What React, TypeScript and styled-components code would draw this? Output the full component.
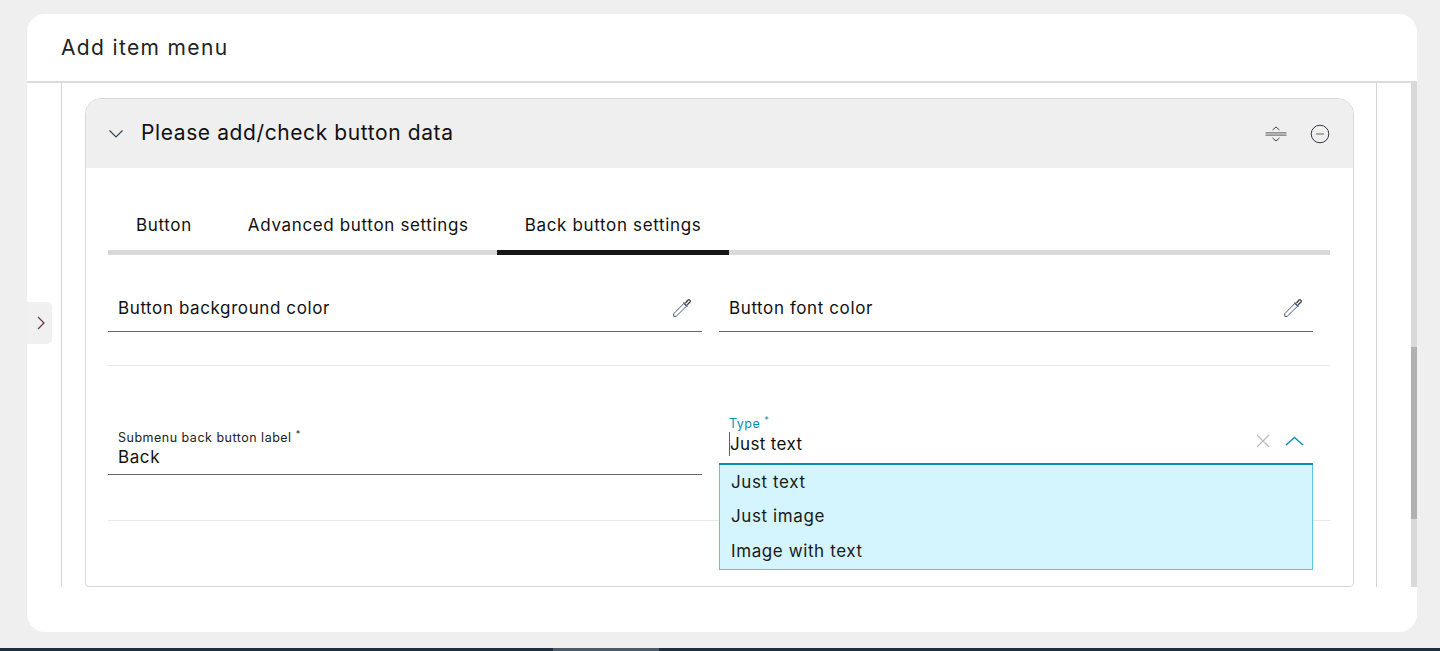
import React from 'react';
import styled, {createGlobalStyle} from 'styled-components';

const GlobalStyle = createGlobalStyle`
  html, body {
    margin: 0;
    padding: 0;
    height: 100%;
    background: #efefef;
    overflow: hidden;
  }
  body {
    font-family: Inter, "Liberation Sans", sans-serif;
    color: #1a1a1a;
  }
`;

const ChevronDown = () => (
    <svg width="16" height="10" viewBox="0 0 16 10" fill="none" stroke="#33475b" strokeWidth="1.2">
        <path d="M1.5 1.5 L8 8 L14.500 1.5"/>
    </svg>
);

const ExpandIcon = () => (
    <svg width="22" height="18" viewBox="0 0 22 18" fill="none">
        <path d="M7.500 5 L11 2 L14.500 5" stroke="#444" strokeWidth="1"/>
        <path d="M7.500 13 L11 16 L14.500 13" stroke="#444" strokeWidth="1"/>
        <path d="M0.500 7.800 H21.500 M0.500 10.200 H21.500" stroke="#777" strokeWidth="1.200"/>
    </svg>
);

const MinusCircleIcon = () => (
    <svg width="20" height="20" viewBox="0 0 20 20" fill="none">
        <circle cx="10" cy="10" r="8.800" stroke="#3a3a4a" strokeWidth="1"/>
        <path d="M6 10 H14" stroke="#a8a8a8" strokeWidth="2"/>
    </svg>
);

const PipetteIcon = () => (
    <svg width="20" height="20" viewBox="0 0 20 20" fill="none" stroke="#4a5a78" strokeWidth="1">
        <path d="M11.800 5.500 L14.500 8.200 L4.200 18.300 L1.800 18.500 L1.700 15.800 Z"/>
        <path d="M11.500 4.500 L15.500 8.500" strokeWidth="1.200"/>
        <path d="M13.500 5 L16 2 C17.200 1 19 2.600 18 4 L15.200 6.700" strokeWidth="1.300" stroke="#3a3a4a"/>
    </svg>
);

const CloseIcon = () => (
    <svg width="14" height="14" viewBox="0 0 14 14" fill="none" stroke="#bcbcbc" strokeWidth="1.200">
        <path d="M1 1 L13 13 M13 1 L1 13"/>
    </svg>
);

const ChevronUp = () => (
    <svg width="19" height="10" viewBox="0 0 19 10" fill="none" stroke="#1a8fb5" strokeWidth="1.600">
        <path d="M1 9 L9.500 1.500 L18 9"/>
    </svg>
);

const ChevronRight = () => (
    <svg width="8" height="14" viewBox="0 0 8 14" fill="none" stroke="#6b3a55" strokeWidth="1.300">
        <path d="M1 1 L7 7 L1 13"/>
    </svg>
);

const tabs = ['Button', 'Advanced button settings', 'Back button settings'];
const options = ['Just text', 'Just image', 'Image with text'];

const App = () => {
    return (
        <Page>
            <GlobalStyle/>
            <Main>
                <Modal>
                    <ModalHeader>Add item menu</ModalHeader>
                    <ModalBody>
                        <SideToggle><ChevronRight/></SideToggle>
                        <Scroller>
                            <Section>
                                <Card>
                                    <CardHeader>
                                        <CardTitleGroup>
                                            <ChevronDown/>
                                            <CardTitle>Please add/check button data</CardTitle>
                                        </CardTitleGroup>
                                        <CardActions>
                                            <ExpandIcon/>
                                            <MinusCircleIcon/>
                                        </CardActions>
                                    </CardHeader>
                                    <CardContent>
                                        <TabList>
                                            {tabs.map((tab, i) => (
                                                <Tab key={tab} $active={i === 2}>{tab}</Tab>
                                            ))}
                                        </TabList>
                                        <ColorRow>
                                            <ColorField>
                                                <FieldText>Button background color</FieldText>
                                                <PipetteIcon/>
                                            </ColorField>
                                            <ColorField>
                                                <FieldText>Button font color</FieldText>
                                                <PipetteIcon/>
                                            </ColorField>
                                        </ColorRow>
                                        <InputRow>
                                            <TextField>
                                                <FieldLabel>Submenu back button label <Star>*</Star></FieldLabel>
                                                <BackValue>Back</BackValue>
                                            </TextField>
                                            <SelectWrap>
                                                <FieldLabel $focused>Type <Star>*</Star></FieldLabel>
                                                <SelectValueRow>
                                                    <SelectValue>Just text</SelectValue>
                                                    <SelectIcons>
                                                        <CloseIcon/>
                                                        <ChevronUp/>
                                                    </SelectIcons>
                                                </SelectValueRow>
                                                <Dropdown>
                                                    {options.map(option => (
                                                        <DropdownItem key={option}>{option}</DropdownItem>
                                                    ))}
                                                </Dropdown>
                                            </SelectWrap>
                                        </InputRow>
                                    </CardContent>
                                </Card>
                            </Section>
                            <ScrollTrack>
                                <ScrollThumb/>
                            </ScrollTrack>
                        </Scroller>
                    </ModalBody>
                </Modal>
            </Main>
            <BottomBar>
                <BottomBarTab/>
            </BottomBar>
        </Page>
    );
};

export default App;

const Page = styled.div`
  height: 651px;
  display: flex;
  flex-direction: column;
  overflow: hidden;
`;

const Main = styled.div`
  flex: 1;
  min-height: 0;
  padding: 14px 23px 16px 27px;
  display: flex;
`;

const Modal = styled.div`
  flex: 1;
  min-width: 0;
  background: #fff;
  border-radius: 18px;
  padding-bottom: 45px;
  display: flex;
  flex-direction: column;
  overflow: hidden;
`;

const ModalHeader = styled.div`
  height: 67px;
  flex: none;
  padding-left: 34px;
  display: flex;
  align-items: center;
  font-size: 21px;
  letter-spacing: 1.35px;
  color: #222;
  border-bottom: 2px solid #dcdcdc;
`;

const ModalBody = styled.div`
  position: relative;
  flex: 1;
  min-height: 0;
`;

const SideToggle = styled.div`
  position: absolute;
  left: 0;
  top: 219px;
  width: 25px;
  height: 42px;
  background: #f0f0f0;
  border-radius: 0 5px 5px 0;
  display: flex;
  align-items: center;
  justify-content: flex-end;
  padding-right: 7px;
  box-sizing: border-box;
`;

const Scroller = styled.div`
  height: 100%;
  display: flex;
  padding-left: 34px;
  box-sizing: border-box;
`;

const Section = styled.div`
  flex: 1;
  min-width: 0;
  box-sizing: border-box;
  margin-right: 34px;
  padding: 15px 22px 0 23px;
  border-left: 1px solid #d4d4d4;
  border-right: 1px solid #d4d4d4;
`;

const Card = styled.div`
  height: 100%;
  box-sizing: border-box;
  border: 1px solid #d8d8d8;
  border-radius: 16px 16px 4px 4px;
  overflow: visible;
`;

const CardHeader = styled.div`
  height: 69px;
  background: #efefef;
  border-radius: 15px 15px 0 0;
  display: flex;
  align-items: center;
  justify-content: space-between;
  padding: 0 23px 0 22px;
`;

const CardTitleGroup = styled.div`
  display: flex;
  align-items: center;
  gap: 17px;
`;

const CardTitle = styled.div`
  font-size: 21px;
  letter-spacing: 0.6px;
  color: #111;
  margin-top: -2px;
`;

const CardActions = styled.div`
  display: flex;
  align-items: center;
  gap: 23px;
`;

const CardContent = styled.div`
  padding: 33px 23px 0 22px;
`;

const TabList = styled.div`
  display: flex;
  border-bottom: 5px solid #d9d9d9;
  height: 49px;
`;

const Tab = styled.div<{$active?: boolean}>`
  padding: 0 28px 2px;
  height: 54px;
  box-sizing: border-box;
  display: flex;
  align-items: center;
  font-size: 17px;
  letter-spacing: 0.65px;
  color: #111;
  border-bottom: 5px solid ${p => (p.$active ? '#161616' : 'transparent')};
`;

const ColorRow = styled.div`
  display: grid;
  grid-template-columns: 594px 594px;
  column-gap: 17px;
  padding: 34px 0 33px;
  border-bottom: 1px solid #e8e8e8;
`;

const ColorField = styled.div`
  height: 43px;
  box-sizing: border-box;
  display: flex;
  align-items: center;
  justify-content: space-between;
  padding: 0 10px 4px;
  border-bottom: 1px solid #666;
`;

const FieldText = styled.div`
  font-size: 17px;
  letter-spacing: 0.6px;
  color: #111;
  line-height: 20px;
`;

const BackValue = styled(FieldText)`
  margin-top: 2px;
`;

const InputRow = styled.div`
  display: grid;
  grid-template-columns: 594px 594px;
  column-gap: 17px;
  height: 155px;
  box-sizing: border-box;
  padding-top: 49px;
  border-bottom: 1px solid #e8e8e8;
  align-items: start;
`;

const TextField = styled.div`
  margin-top: 15px;
  height: 45px;
  box-sizing: border-box;
  padding: 0 10px;
  border-bottom: 1px solid #666;
`;

const FieldLabel = styled.div<{$focused?: boolean}>`
  font-size: 12.500px;
  letter-spacing: 0.5px;
  line-height: 15px;
  color: ${p => (p.$focused ? '#0a8db0' : '#222')};
`;

const Star = styled.sup`
  font-size: 9px;
  line-height: 0;
`;

const SelectWrap = styled.div`
  position: relative;
  height: 50px;
  box-sizing: border-box;
  padding: 1px 10px 0;
  border-bottom: 2px solid #0a8db0;
`;

const SelectValueRow = styled.div`
  display: flex;
  align-items: center;
  justify-content: space-between;
  height: 26px;
`;

const SelectValue = styled(FieldText)`
  border-left: 1px solid #0a7f9f;
  height: 24px;
  line-height: 24px;
  letter-spacing: 0.35px;
`;

const SelectIcons = styled.div`
  display: flex;
  align-items: center;
  gap: 15px;
  margin-top: -7px;
  margin-right: -1px;
`;

const Dropdown = styled.div`
  position: absolute;
  left: 0;
  right: 0;
  top: 50px;
  height: 105px;
  box-sizing: border-box;
  background: #d4f5fe;
  border: 1px solid #5cc4e0;
  border-top: none;
`;

const DropdownItem = styled.div`
  height: 34.500px;
  display: flex;
  align-items: center;
  padding-left: 11px;
  font-size: 17px;
  letter-spacing: 0.6px;
  color: #1a1a1a;
  &:nth-child(2) {
    padding-bottom: 2px;
    box-sizing: border-box;
  }
`;

const ScrollTrack = styled.div`
  width: 6px;
  flex: none;
  background: #d9d9d9;
  padding-top: 264px;
  box-sizing: border-box;
`;

const ScrollThumb = styled.div`
  height: 172px;
  background: #b0b0b0;
`;

const BottomBar = styled.div`
  height: 3px;
  flex: none;
  background: #1c2e40;
  padding-left: 553px;
`;

const BottomBarTab = styled.div`
  width: 106px;
  height: 100%;
  background: #4a5a68;
`;
